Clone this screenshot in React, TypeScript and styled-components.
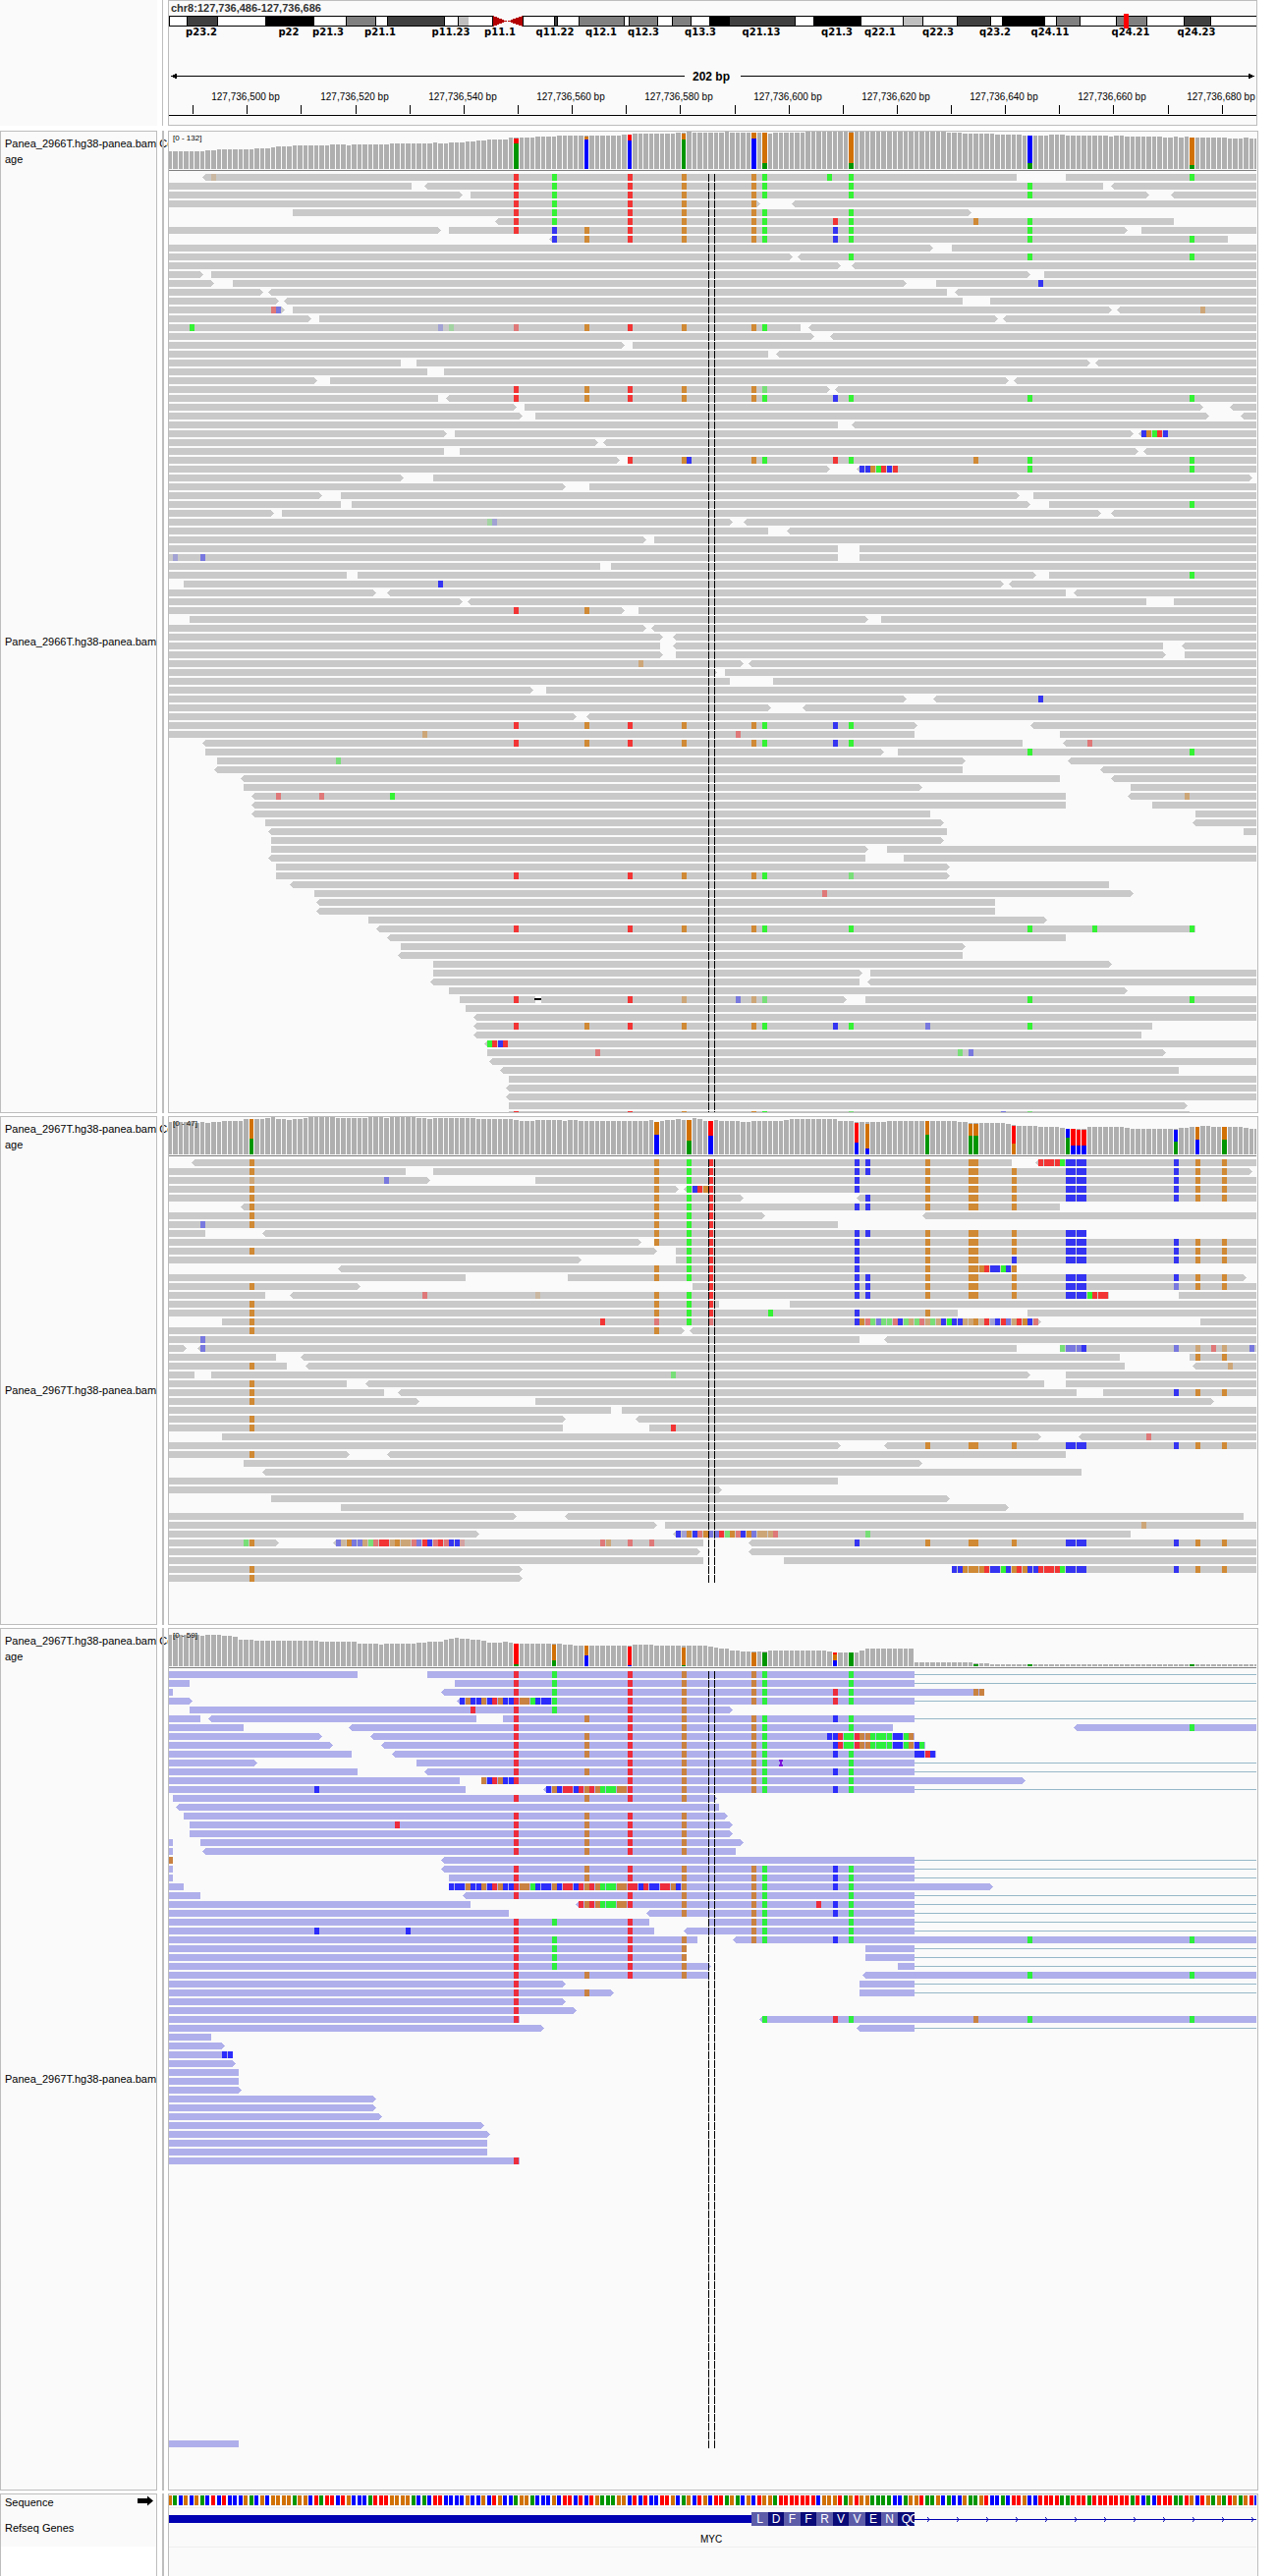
import React from "react";
import styled, { createGlobalStyle } from "styled-components";

/* ------------------------------------------------------------------ */
/* Genome geometry                                                      */
/* ------------------------------------------------------------------ */

const VIEW = 1107;
const BASE = 5.504;
const baseX = (k: number) => Math.floor(k * BASE - 0.53);
const pct = (v: number) => `${(v / VIEW) * 100}%`;

type Palette = Record<string, string>;

const GRAY_READS: Palette = { read: "#c9c9c9", r: "#f23434", g: "#34f234", b: "#3434f2", o: "#d08934" };
const BLUE_READS: Palette = { read: "#afafeb", r: "#ed2c3c", g: "#2cee3c", b: "#2c2cfc", o: "#c98241" };
const BASES: Palette = { r: "#ff0000", g: "#009600", b: "#0000ff", o: "#d17105" };
const LETTERS: Palette = { A: BASES.g, C: BASES.b, G: BASES.o, T: BASES.r };

/*
 * Alignment notation, one row per line:
 *   a:b      a read; "<a" and "b>" mark strand arrows, "_" is the view edge
 *   rX       mismatch coloured r/g/b/o; "~" and "^" lower its base quality
 *   s        splice line to the view edge, d deletion, i insertion
 * Positions are column letters, left-tile units, "+" right-tile units,
 * or coarse units when the line begins with "=".
 */
type Columns = Record<string, number>;

const baseAt = (s: string, coarse: boolean, cols: Columns): number => {
  if (cols[s] !== undefined) return cols[s];
  if (s[0] === "+") return Math.round(101.62 + Number(s.slice(1)) / 15.162);
  return Math.round(coarse ? (Number(s) - 15) / 7.574 : (Number(s) - 30) / 15.136);
};

const shift = (s: string, d: number) =>
  s[0] === "+" ? `+${Number(s.slice(1)) + d}` : String(Number(s) + d);

const COLS_A: Columns = { A: 64, B: 71, C: 77, D: 85, E: 95, F: 108, G: 110, H: 123, I: 126, J: 159, K: 189 };
const COLS_B: Columns = {
  A: 15, C: 90, D: 96, E: 100, F: 127, H: 129, I: 140, J: 148, K: 149, L: 156,
  M: 166, N: 167, O: 168, P: 169, Q: 186, R: 190, S: 195,
};

const M4 = "bM bN bO bP";
const J2 = "oJ oK";
const T = "bQ oR oS";

const ROWS_2966 = `
<130:+843 +978:_ ^o151 rA gB rD oE oF gG g+309 gI gK
_:712 <748:+1086 <+1108:_ rA gB rD oE oF gG gI gJ
_:855> 878:+1213> <+1273:_ rA gB rD oE oF gG gI gJ
_:+120> <+212:_ rA gB rD oE oF
380:+713> rA gB rD oE oF gG gI
<946:+1281 rA gB rD oE oF gG rH gI o+719 gJ
_:795> 817:+1155> +1190:_ rA bB oC rD oE oF gG bH gI gJ
<1098:+1433 bB oC rD oE oF gG bH gI gJ gK
_:+608> +661:_
_:+211> <+227:_ gI gJ gK
_:+349> <+377:_
_:129> 151:+881> +918:_
_:159> 212:+531> +615:_ b+901
_:297> <311:+645 <+667:_
_:341> <355:+692 +766:_
_:357> 380:+1108> <+1122:_ ~r316 ~b333 ~o+1356
_:431> 454:+790> <+805:_
_:+234 <+256:_ g91 ^b787 ^g817 ~rA oC rD oE oF gG
_:+272> <+317:_
_:1311> 1333:_
_:+143 <+165:_
_:682 726:+1046> <+1061:_
_:756 803:_
_:448> 484:+820> <+835:_
_:+319> <+333:_ rA oC rD oE oF ~gG
_:787 <809:_ rA oC rD oE oF gG bH gI gJ gK
_:1007> 1029:+1366> <+1441:_
_:1023> 1062:+1380> <+1472:_
_:+342 <+377:_
_:811> 834:+1168> <+1183:_ b+1190 o+1204 g+1221 r+1235 b+1251
_:1235> <1249:_
_:803 847:+1184> <+1198:_
_:1296> 1318:_ rD oE b1483 oF gG rH gI o+719 gJ gK
_:+319> <+394:_ b+400 b+416 o+430 g+446 r+460 b+477 r+493 gJ gK
_:690> 773:+1502>
_:1144> 1213:_
_:462> 514:+851> +887:_
_:514 545:+881> +934:_ gK
_:327> 349:+1077> <+1108:_
_:+46> <+74:_ ^g922 ^b938
_:+143 <+196:_
_:1372> 1395:_
_:+342 +402:_
_:+342 +402:_ ^b44 ~b121
_:1243 1274:_
_:531 561:+895> +934:_ gK
77:+804> <+818:_ b787
_:613> <643:+978 <+1000:_
_:857> <869:+1207 +1281:_
_:1311> 1348:_ rA oC
91:+424> +463:_
_:1372> <1386:_
_:1417> <1448:_
=_:705 <724:1410 <1436:_
=_:709> 728:1414> 1440:_
=_:823> <830:_ ~o675
=_:785> 796:_
=_:804 865:_
=_:527> 547:_
=_:1050> <1088:_ b1235
=_:860> <906:_
=_:588> <603:_
=_:1066> <1224:_ rA oC rD oE oF gG bH gI
=_:1061 1267:_ ~o370 ~r811
=<65:1213 <1269:_ rA oC rD oE oF gG bH gI ~r1304
=69:1020> 1039:_ gJ gK
=84:1134> <1278:_ ~g249
=<80:1130 <1323:_
=<117:1267 <1338:_
=121:1073> 1364:_
=<132:1273 <1360:_ ~r167 ~r227 g325 ~o1440
=<132:1273 1395:_
=<132:1085 1455:_
=151:1104> <1451:_
=<156:1107 1524:_
=160:1104>
=160:996> 1023:_
=<156:993 1046:_
=167:1111>
=167:1111> rA rD oE oF gG ~gI
=<186:1334
=220:1368> ~r932
=<223:1176
=<223:1176
=296:1247>
=<307:1454 rA rD oE oF gG gI gJ g1311 gK
=<322:1273
=341:1134>
=<338:1130
=387:1338>
=387:989> 1001:_
=<383:986 <997:_
=409:1361>
=424:531 538:966> 993:_ d531 rA rD ~oE ~b811 ~oF ~gG gJ gK
=432:_
=<444:_
=<444:1395 rA oC rD oE oF gG bH gI ~b1077 gJ
=<444:1379
=<458:_ g461 r469 b476 r485
=463:1414> ~r614 ~g1122 ~b1137
=<465:_
=<480:1433
=493:_
=<489:_
=<489:_
=493:1444>
=493:1448 rA rD oE oF gG ~gI ~b1183 ~gJ
`;

const ROWS_2967 = `
<99:+827 <+896:_ oA oC gD rE bF bH oI ${J2} r+901 r+918 r+931 r+948 g+962 ${M4} ${T}
_:696 773:+1502> oA oC gD rE bF bH oI ${J2} oL ${M4} ${T}
_:764> 1062:_ ~oA ~b635 oC gD rE bF oI ${J2} oL ${M4} ${T}
_:1463> <1477:_ oA oC gD b1499 r1514 o1529 rE bF oI ${J2} oL ${M4} ${T}
_:+76> <+394:_ oA oC gD rE bH oI ${J2} oL ${M4} ${T}
<235:+964 oA oC gD rE bF bH oI ${J2} oL
_:+137> <+576:_ oA oC gD rE
_:+342 ~b121 oA oC gD rE
_:138 <294:+1024 oC gD rE bF bH oI ${J2} oL ${M4}
_:1355> 1392:_ oC gD rE bF oI ${J2} oL ${M4} ${T}
_:1402> 1455:_ oA gD rE bF oI ${J2} oL ${M4} ${T}
_:1190> 1455:_ gD rE bF oI ${J2} bL ${M4} ${T}
<506:+843 oC gD rE bF oI ${J2} o+736 r+750 b+766 b+780 g+796 b+810 oL
_:864 1153:+1487> oC gD rE bF bH oI ${J2} oL ${M4} ${T}
_:569> 1499:_ oA rE bF bH oI ${J2} oL ${M4} ~bQ oR oS
_:303 <371:+1099 +1298:_ ~r740 ^o1059 oC gD rE bF bH oI ${J2} oL ${M4} g+1039 r+1053 r+1069 r+1083
_:+8 +204:_ oA oC gD rE
_:+675 +874:_ oA oC gD rE g+143 bF oI
182:+911> +1359:_ oA r1241 ~rC gD ~rE bF o+400 ~r+416 ~g+430 ~b+446 ~g+460 ~g+477 ~r+493 b+507 ~g+523 ~o+538 ~g+554 ~r+568 ~o+584 ~g+598 ~o+614 b+628 g+645 b+659 b+675 ~o+689 ~o+705 o+719 ^o+736 r+750 ^b+766 b+780 r+796 ~b+810 ~o+827 r+840 o+857 b+871 ~r+887
_:1477> <1491:_ oA oC
_:+402 <+468:_ ~b121
_:85> <113:+843 +962:_ ~b121 ~g+962 ~bM ~bN ~bO bP ~bQ ~oR ~r+1386 ~oS ~b+1494
_:333 <402:+1130 +1328:_ oR oS
_:363 <415:+1146 <+1334:_ oA ~o+1433
_:107 151:+881> +978:_ ~g1439
_:531 <583:+918 +978:_ oA
_:635 <674:+1009 +1086:_ oA bQ oR oS
_:733> 1062:+1396> oA
_:1274 1304:_
_:1144> <1340:_ oA
_:1136 1378:_ oA r1439
182:+911> <+1018:_ ~r+1204
_:+349> <+468:_ oI ${J2} oL ${M4} ${T}
_:538> <643:+978 oA
242:+578>
<294:+1024
_:+342
_:+16>
319:+652>
514:+820>
_:1007> <1144:+1480
_:1402> 1425:_ ~o+1190
_:901> <1448:+1160 b1452 ^b1469 oD b1499 ~r1514 o1529 ~bE ~b1561 r+6 ~g+22 o+36 ~r+52 b+66 o+83 ~b+96 ~o+113 ~o+127 ~o+143 ~r+157 ~g+416
_:340> <492:1529 <+91:_ ~g242 oA ~b498 ^o514 o528 ~b545 ~b558 ~o575 ~g589 ~r605 r619 r635 ~o649 o666 ~o680 ~o696 ~r710 ~b726 r740 b756 ~r770 r787 ~r801 b817 b831 ^r847 ~r1241 ~o1257 ~r1318 ~r1378 bF oI ${J2} oL ${M4} ${T}
_:1523> <+91:_
_:1529 +190:_
_:1023> +659:_ oA b+659 b+675 o+689 oJ oK o+736 r+750 b+766 b+780 g+796 b+810 oL r+840 o+857 b+871 b+887 r+901 r+918 r+931 r+948 g+962 ${M4} ${T}
_:1023> oA
`;

const CLIP_A = "b847 o861 b878 b892 o908 b922 r938 o952 b968 b982";
const CLIP_B = "o1012 o1029 g1045 b1059 b1076 b1090";
const CLIP_C = "b1120 r1136 r1150 b1166 r1180";
const CLIP_D = "r1210 o1227 g1241 g1257 g1271 o1287 o1301";
const CLIP_E = "r+339 g+355 g+369 r+386 o+400 o+416 g+430 g+446 g+460 g+477 b+493 b+507 g+523 o+538";

const ROWS_RNA = `
_:561 756:+554 s rA gB rD oE oF gG gI
_:91 834:+554 s rA gB rD oE oF gG gI
_:47 <795:+752 rA gB rD oE oF gG rH gI o+719 o+736
_:98> <839:+554 s ${CLIP_A} rA ${CLIP_B} gB rD oE oF gG rH gI
91:+46> r878 rA gB rD oE
_:121 <144:894 968:+554 s rA oC rD oE oF gG bH gI
_:242 <536:+493 <+1000:_ rA rD oE oF gG gI gK
_:461> <597:+554 rA oC rD oE oF gG b+309 bH ${CLIP_E}
_:492> <627:+584 rA oC rD oE oF gG bH ${CLIP_E} b+554 g+568
_:545 <657:+615 rA oC rD oE oF gG bH gI b+554 b+568 r+584 b+598
_:280> 726:+554 s rA rD oE oF gG gI i+171
_:561 <748:+554 s rA oC rD oE oF gG bH gI
_:847 908:+865> o908 b922 r938 o952 b968 b982 rA rD oE oF gG gI
_:864 <1084:+554 s b437 b1089 oB ${CLIP_C} oC ${CLIP_D} rD oE oF gG bH gI
47:1565> rA oC rD oE
<53:+8
77:+30> rA oC rD oE
91:+46> r666 rA oC rD oE
91:+46> rA oC rD oE
_:47 121:+76> rA oC rD oE
_:47 <130:+52 rA oC rD oE
_:47 <795:+554 s o30
_:47 <795:+554 s rA oC rD oE oF gG bH gI
_:47 817:+554 s rA oC rD oE oF gG bH gI
_:77 817:+773> b817 b831 ${CLIP_A} rA ${CLIP_B} oB ${CLIP_C} oC ${CLIP_D} rD r1332 b1348 r1362 b1378 b1392 r1408 r1422 o1439 b1452 oE oF gG bH gI
_:121 <856:+554 s rA rD oE oF gG gI
_:878 <1175:+554 s r1180 oC ${CLIP_D} rD oE oF gG r+278 bH gI
_:985 <1370:+554 s oE oF gG bH gI
_:1378 1544:+554 s rA gB rD oF gG gI
_:1395 <1478:+554 s b437 b696 rA rD oF gG gI
_:1516 <+44:_ rA gB rD oE oF gG bH gI gJ gK
_:1485 +416:+554 s rA gB rD oE
_:1485 +416:+554 s rA gB rD oE
_:1553> +510:+554 s rA gB rD oE
_:1544 <+408:_ rA oC rD oE gJ gK
_:1144> +402:+554 s rA
_:1281> +402:+554 s rA oC
_:1144> rA
_:1174> rA
_:1015 <+121:_ rA gG rH gI o+719 gJ gK
_:1083> <+394:+554 s
_:151
_:190>
_:211 b182 b196
_:219>
_:228
_:228
_:236>
_:613>
_:613>
_:629>
_:916>
_:932>
_:924
_:924
_:1015 rA
${"-\n".repeat(31)}_:228
`;

/* Coverage profiles: [first base after the run, depth in px] */
type Runs = [number, number][];
type Stacks = Record<number, [string, number][]>;

const COVER_2966: Runs = [
  [7, 18], [9, 19], [16, 20], [19, 21], [20, 22], [23, 23], [30, 24], [33, 25], [34, 24], [41, 25],
  [49, 26], [50, 27], [52, 26], [55, 27], [57, 28], [59, 29], [63, 30], [68, 32], [72, 33], [84, 34],
  [86, 35], [94, 36], [96, 37], [97, 38], [103, 37], [104, 38], [111, 37], [112, 36], [118, 37],
  [144, 38], [147, 37], [153, 36], [158, 35], [163, 34], [166, 35], [174, 34], [175, 33], [177, 34],
  [184, 33], [186, 32], [187, 33], [188, 32], [189, 33], [196, 32], [199, 31], [200, 32], [202, 31],
];
const STACK_2966: Stacks = {
  64: [["g", 26], ["r", 5]], 77: [["b", 30], ["o", 3]], 85: [["b", 29], ["r", 6]],
  95: [["g", 30], ["o", 6]], 108: [["b", 31], ["o", 6]], 110: [["g", 6], ["o", 31]],
  126: [["g", 6], ["o", 31]], 159: [["g", 6], ["b", 28]], 189: [["g", 4], ["o", 28]],
};
const COVER_2967: Runs = [
  [5, 33], [6, 32], [7, 33], [8, 32], [10, 33], [14, 34], [18, 36], [19, 37], [20, 38], [22, 36],
  [23, 35], [25, 36], [26, 37], [31, 38], [37, 37], [40, 38], [41, 37], [46, 38], [48, 37], [49, 36],
  [57, 37], [64, 36], [65, 35], [68, 34], [73, 35], [74, 34], [76, 35], [89, 34], [90, 35], [91, 33],
  [92, 34], [94, 35], [95, 36], [97, 35], [98, 37], [99, 36], [101, 34], [102, 35], [106, 34],
  [108, 33], [114, 34], [115, 35], [124, 36], [127, 34], [133, 33], [146, 34], [148, 33], [155, 32],
  [156, 31], [157, 30], [161, 29], [165, 28], [166, 27], [170, 26], [177, 28], [178, 27], [187, 26],
  [189, 27], [191, 28], [193, 29], [199, 28], [200, 27], [202, 26],
];
const STACK_2967: Stacks = {
  15: [["g", 16], ["o", 20]], 90: [["b", 20], ["o", 13]], 96: [["g", 14], ["o", 21]],
  100: [["b", 19], ["r", 15]], 127: [["b", 12], ["r", 20]], 129: [["b", 6], ["o", 25]],
  140: [["g", 20], ["o", 14]], 148: [["g", 19], ["o", 12]], 149: [["g", 19], ["o", 12]],
  156: [["o", 11], ["r", 18]], 166: [["g", 17], ["b", 9]], 167: [["b", 9], ["r", 17]],
  168: [["b", 9], ["r", 16]], 169: [["b", 9], ["r", 16]], 186: [["g", 13], ["b", 12]],
  190: [["b", 15], ["o", 13]], 195: [["g", 15], ["o", 13]],
};
const COVER_RNA: Runs = [
  [6, 32], [7, 31], [10, 32], [12, 31], [13, 30], [16, 27], [28, 26], [35, 25], [39, 23], [40, 22],
  [46, 23], [48, 24], [51, 25], [52, 27], [53, 28], [54, 29], [56, 28], [58, 27], [59, 26], [62, 24],
  [63, 25], [64, 24], [73, 23], [75, 22], [86, 21], [90, 22], [100, 21], [101, 20], [102, 19],
  [104, 18], [106, 16], [111, 15], [122, 16], [123, 15], [128, 14], [129, 16], [138, 18], [149, 4],
  [152, 3], [202, 2],
];
const STACK_RNA: Stacks = {
  64: [["g", 2], ["r", 21]], 71: [["g", 6], ["o", 16]], 77: [["b", 11], ["o", 10]],
  85: [["b", 1], ["r", 19]], 95: [["g", 1], ["o", 18]], 108: [["o", 14]], 110: [["g", 14]],
  123: [["b", 6], ["o", 6], ["r", 2]], 126: [["g", 14]], 149: [["g", 2]], 159: [["g", 2]], 189: [["g", 2]],
};

const SEQUENCE =
  "GACGCGACTCTCCCGACGCGGGGAGGCTATTCTGCCCATTTGGGGACACTTCCCCGCCGCTGCCAGGACC" +
  "CGCTTCTCTGAAAGGCTCTCCTTGCAGCTGCTTAGACGCTGGATTTTTTTCGGGTAGTGGAAAACCAGGT" +
  "AAGCACCGAAGTCCACTTGCCTTTTAATTTATTTTTTTATCACTTTAATGCTGAGATGAGTC";

/* Cytobands: [start, end, stain] */
const BANDS: [number, number, string][] = [
  [0, 18, "#fff"], [18, 49, "#404040"], [49, 98, "#fff"], [98, 147, "#000"], [147, 180, "#fff"],
  [180, 210, "#808080"], [210, 222, "#fff"], [222, 280, "#404040"], [280, 294, "#fff"],
  [294, 305, "#bfbfbf"], [305, 330, "#fff"], [360, 392, "#fff"], [392, 395, "#404040"],
  [395, 417, "#fff"], [417, 463, "#808080"], [463, 468, "#fff"], [468, 497, "#808080"],
  [497, 512, "#fff"], [512, 531, "#808080"], [531, 550, "#fff"], [550, 570, "#000"],
  [570, 637, "#404040"], [637, 656, "#fff"], [656, 704, "#000"], [704, 747, "#fff"],
  [747, 767, "#bfbfbf"], [767, 802, "#fff"], [802, 836, "#404040"], [836, 848, "#fff"],
  [848, 891, "#000"], [891, 903, "#fff"], [903, 927, "#808080"], [927, 964, "#fff"],
  [964, 995, "#808080"], [995, 1033, "#fff"], [1033, 1060, "#404040"], [1060, 1110, "#fff"],
];
const BAND_NAMES: [number, string][] = [
  [33, "p23.2"], [122, "p22"], [162, "p21.3"], [215, "p21.1"], [287, "p11.23"], [337, "p11.1"],
  [393, "q11.22"], [440, "q12.1"], [483, "q12.3"], [541, "q13.3"], [603, "q21.13"], [680, "q21.3"],
  [724, "q22.1"], [783, "q22.3"], [841, "q23.2"], [897, "q24.11"], [979, "q24.21"], [1046, "q24.23"],
];

/* ------------------------------------------------------------------ */
/* Styled parts                                                         */
/* ------------------------------------------------------------------ */

const Global = createGlobalStyle`
  body { margin: 0; background: #fff; color: #000; font-family: "Liberation Sans", Arial, sans-serif; font-size: 11px; }
`;

const Page = styled.main`
  display: flex;
  flex-direction: column;
  gap: 3px;
  padding-right: 18px;
`;

const Row = styled.section`
  display: flex;
  align-items: stretch;
`;

const HeaderRow = styled(Row)`
  margin-bottom: 2px;
`;

const Names = styled.div<{ $plain?: boolean; $open?: boolean }>`
  box-sizing: border-box;
  flex: 0 0 160px;
  width: 160px;
  display: flex;
  flex-direction: column;
  background: ${(p) => (p.$open ? "#fff" : "#fafafa")};
  border: ${(p) => (p.$plain ? "none" : "1px solid #bdbdbd")};
  border-bottom-width: ${(p) => (p.$open ? 0 : 1)}px;
`;

const Splitter = styled.div<{ $thin?: boolean }>`
  position: relative;
  flex: none;
  width: ${(p) => (p.$thin ? 1 : 2)}px;
  margin: 0 ${(p) => (p.$thin ? 5 : 4)}px 0 5px;
  background: #bebebe;
`;

const Data = styled.div<{ $inset?: boolean; $open?: boolean }>`
  position: relative;
  box-sizing: border-box;
  flex: 1;
  min-width: 0;
  margin-right: ${(p) => (p.$inset ? 1 : 0)}px;
  padding-right: ${(p) => (p.$inset ? 0 : 1)}px;
  background: #fafafa;
  border: 1px solid #bdbdbd;
  border-bottom-width: ${(p) => (p.$open ? 0 : 1)}px;
`;

const CoverageName = styled.div`
  box-sizing: border-box;
  height: 40px;
  padding: 4px 0 0 4px;
  line-height: 16px;
  white-space: pre;
`;

const AlignmentName = styled.div`
  flex: 1;
  display: flex;
  align-items: center;
  padding-left: 4px;
  white-space: nowrap;
`;

const FeatureName = styled.div<{ $height: number }>`
  box-sizing: border-box;
  display: flex;
  align-items: flex-start;
  justify-content: space-between;
  height: ${(p) => p.$height}px;
  padding: 1px 3px 0 4px;
  background: #fafafa;
  line-height: 14px;
`;

const GeneName = styled(FeatureName)`
  align-items: center;
  padding-top: 0;
`;

const Chart = styled.svg`
  display: block;
  width: 100%;
  overflow: hidden;
`;

const Range = styled.span`
  position: absolute;
  top: 2px;
  left: 4px;
  font-size: 8px;
  line-height: 10px;
`;

const Divider = styled.hr`
  margin: 0;
  border: 0;
  height: 1px;
  background: #eeeeee;
`;

const FeatureSpace = styled.div`
  height: 29px;
`;

/* ------------------------------------------------------------------ */
/* Header                                                               */
/* ------------------------------------------------------------------ */

const Ideogram = () => (
  <Chart height={126} role="img" aria-label="Chromosome 8 ideogram and ruler">
    <text x={2} y={11} fontSize={11} fontWeight="bold" fill="#333">chr8:127,736,486-127,736,686</text>
    <g shapeRendering="crispEdges">
      {BANDS.map(([a, b, fill]) => (
        <g key={a}>
          <rect x={pct(a)} y={15} width={pct(b - a)} height={11} fill="#000" />
          <rect x={pct(a + (a === 305 ? 0 : 1))} y={16} width={pct(b - a - 1)} height={9} fill={fill} />
        </g>
      ))}
      <rect x={pct(329)} y={15} width={1} height={11} fill="#000" />
      <svg x={pct(330)} y={15} width={pct(30)} height={11} viewBox="0 0 30 11" preserveAspectRatio="none">
        <path d="M0 0 L14 5.5 L0 11Z M30 0 L15 5.5 L30 11Z" fill="#b40000" />
      </svg>
      <rect x={pct(972)} y={13} width={5} height={15} fill="#f00" />
    </g>
    <g fontFamily="'DejaVu Sans', sans-serif" fontWeight="bold" fontSize={10} textAnchor="middle">
      {BAND_NAMES.map(([x, name]) => (
        <text key={name} x={pct(x)} y={35}>{name}</text>
      ))}
    </g>
    <g shapeRendering="crispEdges">
      <rect x={2} y={76} width={pct(523)} height={1} />
      <rect x={pct(582)} y={76} width={pct(523)} height={1} />
      <path d="M2 76.5 L8 73.5 V79.5Z" />
      <svg x={pct(1098)} y={73} width={8} height={7}>
        <path d="M7 3.5 L1 0.5 V6.5Z" />
      </svg>
    </g>
    <text x={pct(552)} y={81} fontSize={12} fontWeight="bold" textAnchor="middle">202 bp</text>
    {Array.from({ length: 20 }, (_, i) => {
      const tick = Math.round(24.2 + i * 55.13);
      return (
        <g key={i}>
          <rect x={pct(tick)} y={106} width={1} height={9} shapeRendering="crispEdges" />
          {i % 2 === 1 && (
            <text x={pct(tick - 1)} y={101} fontSize={10} textAnchor="middle">{`127,736,${490 + i * 10} bp`}</text>
          )}
        </g>
      );
    })}
    <rect x={0} y={116} width="100%" height={1} shapeRendering="crispEdges" />
  </Chart>
);

/* ------------------------------------------------------------------ */
/* Tracks                                                               */
/* ------------------------------------------------------------------ */

const Coverage = ({ runs, stacks }: { runs: Runs; stacks: Stacks }) => {
  const bars: React.ReactNode[] = [];
  let gray = "";
  let k = 0;
  runs.forEach(([end, depth]) => {
    for (; k < end; k++) {
      const x = baseX(k);
      const w = baseX(k + 1) - 1 - x;
      gray += `M${x} ${38 - depth}h${w}v${depth}h${-w}Z`;
      let y = 38;
      (stacks[k] || []).forEach(([c, h]) => {
        y -= h;
        bars.push(<rect key={`${k}${c}`} x={x} y={y} width={w} height={h} fill={BASES[c]} />);
      });
    }
  });
  return (
    <Chart height={40} viewBox={`0 0 ${VIEW} 40`} preserveAspectRatio="none" shapeRendering="crispEdges">
      <path d={gray} fill="#afafaf" />
      {bars}
      <rect x={0} y={39} width={VIEW} height={1} fill="#7f7f7f" />
    </Chart>
  );
};

const Alignment = ({ line, y, colors, cols }: { line: string; y: number; colors: Palette; cols: Columns }) => {
  const coarse = line[0] === "=";
  const tip = coarse ? 4 : 8;
  let reads = "";
  const marks: React.ReactNode[] = [];
  (coarse ? line.slice(1) : line).split(" ").forEach((token, i) => {
    if (token === "-") return;
    if (token === "s") {
      const x = baseX(138);
      marks.push(<rect key={i} x={x} y={y + 3} width={VIEW - x} height={1} fill="#96b8c8" />);
    } else if (token.includes(":")) {
      const [a, b] = token.split(":");
      const left = a[0] === "<";
      const right = b.endsWith(">");
      const x0 = a === "_" ? 0 : baseX(baseAt(left ? shift(a.slice(1), tip) : a, coarse, {}));
      const x1 = b === "_" ? VIEW : baseX(baseAt(right ? shift(b.slice(0, -1), -tip) : b, coarse, {}));
      reads += `M${x0} ${y}H${x1}`;
      reads += right ? `l3 3.5 l-3 3.5` : `v7`;
      reads += `H${x0}`;
      reads += left ? `l-3 -3.5Z` : `Z`;
    } else {
      const [, quality, kind, pos] = token.match(/^([~^]?)([a-z])(.+)$/) as RegExpMatchArray;
      const x = baseX(baseAt(pos, coarse, cols));
      if (kind === "d") {
        marks.push(<rect key={i} x={x - 1} y={y + 2} width={7} height={2} />);
      } else if (kind === "i") {
        marks.push(<path key={i} d={`M${x} ${y}h4v2h-1v3h1v2h-4v-2h1v-3h-1Z`} fill="#7a14dc" />);
      } else {
        const opacity = quality === "~" ? 0.54 : quality === "^" ? 0.26 : 1;
        marks.push(<rect key={i} x={x} y={y} width={5} height={7} fill={colors[kind]} opacity={opacity} />);
      }
    }
  });
  return (
    <g>
      <path d={reads} fill={colors.read} />
      {marks}
    </g>
  );
};

const Pileup = ({ rows, height, colors, cols }: { rows: string; height: number; colors: Palette; cols: Columns }) => {
  const lines = rows.trim().split("\n");
  const end = 3 + lines.length * 9 - 1;
  return (
    <Chart height={height} viewBox={`0 0 ${VIEW} ${height}`} preserveAspectRatio="none" shapeRendering="crispEdges">
      {lines.map((line, i) => (
        <Alignment key={i} line={line} y={3 + i * 9} colors={colors} cols={cols} />
      ))}
      <path d={`M549.5 3V${end}M555.5 3V${end}`} stroke="#000" strokeDasharray="8 1" />
    </Chart>
  );
};

interface TrackProps {
  sample: string;
  depth: number;
  runs: Runs;
  stacks: Stacks;
  rows: string;
  height: number;
  colors: Palette;
  cols: Columns;
}

const TrackPanel = ({ sample, depth, runs, stacks, rows, height, colors, cols }: TrackProps) => (
  <Row>
    <Names>
      <CoverageName>{`${sample} Cover\nage`}</CoverageName>
      <AlignmentName>{sample}</AlignmentName>
    </Names>
    <Splitter />
    <Data>
      <Coverage runs={runs} stacks={stacks} />
      <Range>{`[0 - ${depth}]`}</Range>
      <Pileup rows={rows} height={height} colors={colors} cols={cols} />
    </Data>
  </Row>
);

const SequenceTrack = () => (
  <Chart height={13} viewBox={`0 0 ${VIEW} 13`} preserveAspectRatio="none" shapeRendering="crispEdges">
    {SEQUENCE.split("").map((letter, k) => (
      <rect key={k} x={baseX(k)} y={1} width={4} height={10} fill={LETTERS[letter]} />
    ))}
  </Chart>
);

const GeneTrack = () => {
  const exonEnd = baseX(138);
  return (
    <Chart height={39} role="img" aria-label="MYC">
      <g shapeRendering="crispEdges">
        <rect x={0} y={7} width={pct(baseX(108))} height={8} fill="#0000b2" />
        <rect x={pct(exonEnd)} y={11} width={pct(VIEW - exonEnd)} height={1} fill="#0000b2" />
      </g>
      {Array.from({ length: 12 }, (_, i) => (
        <svg key={i} x={pct(772 + i * 30)} y={9} width={3} height={5}>
          <path d="M0 0L2 2.5L0 5" fill="none" stroke="#0000b2" />
        </svg>
      ))}
      {"LDFFRVVENQ".split("").map((letter, i) => {
        const a = baseX(108 + i * 3);
        const b = baseX(111 + i * 3);
        const last = i === 9;
        return (
          <svg key={i} x={pct(a)} y={4} width={pct(b - a)} height={14}>
            <rect width="100%" height={14} fill={i % 2 ? "#0a0a78" : "#5c5ca8"} shapeRendering="crispEdges" />
            <text x="50%" y={11} textAnchor="middle" fontSize={12} fill="#fff">{letter}</text>
            {last && <text x={12} y={11} fontSize={12} fill="#fff">Q</text>}
          </svg>
        );
      })}
      <text x={pct(552)} y={35} fontSize={10} textAnchor="middle">MYC</text>
    </Chart>
  );
};

const StrandArrow = () => (
  <svg width={16} height={11} viewBox="0 0 16 11" aria-label="Forward strand">
    <path d="M0 3H10V0.5L16 5.5L10 10.5V8H0Z" />
  </svg>
);

export default function App() {
  return (
    <>
      <Global />
      <Page>
        <HeaderRow>
          <Names $plain />
          <Splitter $thin />
          <Data $inset>
            <Ideogram />
          </Data>
        </HeaderRow>
        <TrackPanel
          sample="Panea_2966T.hg38-panea.bam"
          depth={132}
          runs={COVER_2966}
          stacks={STACK_2966}
          rows={ROWS_2966}
          height={958}
          colors={GRAY_READS}
          cols={COLS_A}
        />
        <TrackPanel
          sample="Panea_2967T.hg38-panea.bam"
          depth={47}
          runs={COVER_2967}
          stacks={STACK_2967}
          rows={ROWS_2967}
          height={476}
          colors={GRAY_READS}
          cols={COLS_B}
        />
        <TrackPanel
          sample="Panea_2967T.hg38-panea.bam"
          depth={59}
          runs={COVER_RNA}
          stacks={STACK_RNA}
          rows={ROWS_RNA}
          height={836}
          colors={BLUE_READS}
          cols={COLS_A}
        />
        <Row>
          <Names $open>
            <FeatureName $height={14}>
              Sequence
              <StrandArrow />
            </FeatureName>
            <GeneName $height={39}>Refseq Genes</GeneName>
          </Names>
          <Splitter />
          <Data $open>
            <SequenceTrack />
            <Divider />
            <GeneTrack />
            <Divider />
            <FeatureSpace />
          </Data>
        </Row>
      </Page>
    </>
  );
}
